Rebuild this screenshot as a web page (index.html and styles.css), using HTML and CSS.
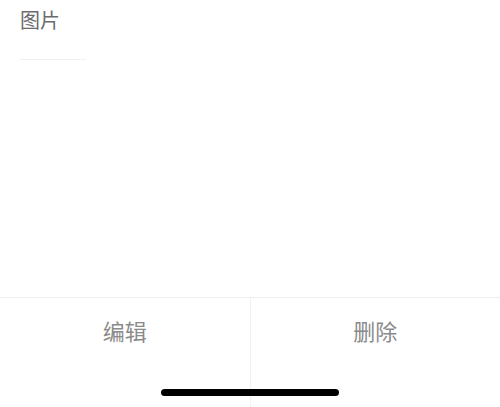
FILE: index.html
```html
<!DOCTYPE html>
<html lang="zh">
<head>
<meta charset="utf-8">
<link rel="stylesheet" href="styles.css">
</head>
<body>
<div class="page">
  <main class="content">
    <h1 class="title">图片</h1>
    <div class="rule"></div>
  </main>
  <footer class="actions">
    <div class="action action-left"><span class="label">编辑</span></div>
    <div class="action"><span class="label">删除</span></div>
    <div class="home-indicator"></div>
  </footer>
</div>
</body>
</html>
```
FILE: styles.css
```css
html, body {
  margin: 0;
  padding: 0;
  background: #ffffff;
}
body {
  font-family: "Noto Sans CJK SC", "Noto Sans", sans-serif;
}
.page {
  width: 500px;
  height: 407px;
  display: flex;
  flex-direction: column;
  overflow: hidden;
}
.content {
  flex: 1;
  padding: 6px 20px 0;
}
.title {
  margin: 0;
  font-size: 20px;
  line-height: 28px;
  font-weight: 400;
  color: #6b6b6b;
}
.rule {
  width: 66px;
  height: 1px;
  background: #f0f0f0;
  margin-top: 25px;
}
.actions {
  position: relative;
  height: 109px;
  border-top: 1px solid #eeeeee;
  display: flex;
}
.action {
  flex: 1;
  text-align: center;
}
.action-left {
  border-right: 1px solid #f2f2f2;
}
.label {
  display: block;
  height: 64px;
  line-height: 64px;
  font-size: 22px;
  color: #8a8a8a;
}
.home-indicator {
  position: absolute;
  left: 161px;
  bottom: 11px;
  width: 178px;
  height: 7px;
  border-radius: 4px;
  background: #000000;
}
```
